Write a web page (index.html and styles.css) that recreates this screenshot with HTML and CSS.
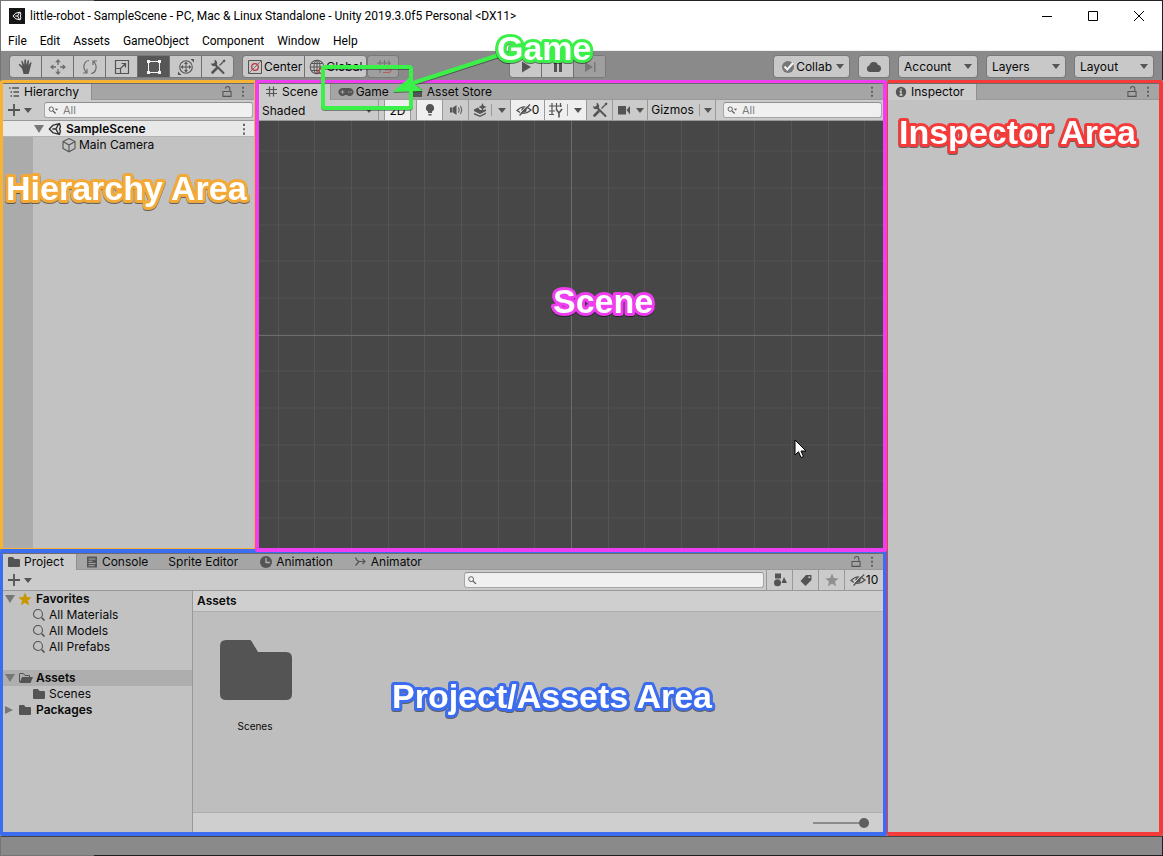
FILE: index.html
```html
<!DOCTYPE html>
<html lang="en">
<head>
<meta charset="utf-8">
<title>little-robot - SampleScene - Unity</title>
<link rel="stylesheet" href="styles.css">
</head>
<body>
<svg class="sprite" aria-hidden="true">
  <symbol id="unity" viewBox="0 0 16 16"><path d="M1.500 8 6 3.500 13 1.800 14.200 5.500 13.200 8 14.200 10.500 13 14.200 6 12.500ZM5 8h4M9 8l3-5.500M9 8l3 5.500" fill="none" stroke="currentColor" stroke-width="1.600" stroke-linejoin="round"/></symbol>
  <symbol id="hand" viewBox="0 0 16 16"><path d="M3.600 9 1 6.200c-.5-.8.4-1.500 1.200-.9L4.500 7.300 3.300 2.600c-.2-1 1-1.300 1.400-.4L6.200 6 6.400 1c.1-1 1.500-1 1.600 0L8.300 6l1.300-4.500c.3-.9 1.500-.6 1.400.3L10.500 6.600l1.800-3c.5-.8 1.500-.3 1.200.6-1 2.500-1.100 5-2 7.800L10.500 15h-5C5 12.500 4.500 10.500 3.600 9z" fill="currentColor"/></symbol>
  <symbol id="move" viewBox="0 0 16 16"><path d="M8 2.500v3.500M8 10v3.500M2.500 8H6M10 8h3.500" stroke="currentColor" stroke-width="1.300"/><path d="M8 0l2.800 3.300H5.200zM8 16l2.800-3.300H5.200zM0 8l3.300-2.800v5.600zM16 8l-3.300-2.800v5.600z" fill="currentColor"/></symbol>
  <symbol id="rotate" viewBox="0 0 16 16"><path d="M7 1.500C2.500 1.800-.5 8.500 4.500 13.700M1 14h4v-4M9 14.500c4.500-.3 7.500-7 2.500-12.200M15 2h-4v4" fill="none" stroke="currentColor" stroke-width="1.200"/></symbol>
  <symbol id="scale" viewBox="0 0 16 16"><path d="M1.500 1.500h13v13h-13zM1.500 9.500h5v5M6.500 9.500l5-5M7.500 4.500h4v4" fill="none" stroke="currentColor" stroke-width="1.200"/></symbol>
  <symbol id="rect" viewBox="0 0 16 16"><path d="M2.500 4v8M13.500 4v8M4 2.500h8M4 13.500h8" stroke="currentColor"/><path d="M1 1h3v3H1zM12 1h3v3h-3zM1 12h3v3H1zM12 12h3v3h-3z" fill="currentColor"/></symbol>
  <symbol id="transform" viewBox="0 0 16 16"><circle cx="8" cy="8" r="6.300" fill="none" stroke="currentColor" stroke-width="1.100"/><path d="M8 4v8M4 8h8" stroke="currentColor"/><path d="M8 2.500l2 2.500H6zM8 13.500l2-2.500H6zM2.500 8L5 6v4zM13.500 8L11 6v4zM12.500 0H16v3.500zM0 12.500V16h3.500z" fill="currentColor"/></symbol>
  <symbol id="tools" viewBox="0 0 16 16"><path d="M5.500 6l8 8" stroke="currentColor" stroke-width="2" stroke-linecap="round"/><path d="M4.500.8 4.800 3.300 3.200 4.700 1 4.300C1 6.800 4 8 6 6.800l1-1.200C7.700 3.500 6.500 1.200 4.500.8z" fill="currentColor"/><path d="M14.500 1.500 9.500 6.500" stroke="currentColor" stroke-width="1.300"/><path d="M6.500 9.500 2.500 13.500" stroke="currentColor" stroke-width="2.600" stroke-linecap="round"/><path d="M12.500 1.500 14.500.5l1 1-1 2z" fill="currentColor"/></symbol>
  <symbol id="center" viewBox="0 0 16 16"><path d="M1.500 1.500h13v13h-13z" fill="none" stroke="currentColor"/><path d="M2 14 14 2" stroke="currentColor" stroke-width=".7"/><circle cx="8" cy="8" r="3.300" fill="none" stroke="#c3383c" stroke-width="1.300"/></symbol>
  <symbol id="globe" viewBox="0 0 16 16"><g fill="none" stroke="currentColor" stroke-width="1.100"><circle cx="8" cy="8" r="6.800"/><ellipse cx="8" cy="8" rx="3" ry="6.800"/><path d="M1 8h14M2.500 4.500h11M2.500 11.500h11M8 1v14"/></g><circle cx="12.500" cy="12" r="2.500" fill="#c9c9c9" stroke="#c3383c" stroke-width="1.300"/></symbol>
  <symbol id="snap" viewBox="0 0 16 16"><path d="M4 1v13M8.500 1v9M13 1v6M1 4h14M1 8.500h10" stroke="currentColor"/><path d="M9 11h3c2 0 2-3 0-3M7 13.500h5c4 0 4-5.500 1-6" fill="none" stroke="#c3383c" stroke-width="1.200"/></symbol>
  <symbol id="play" viewBox="0 0 16 16"><path d="M4 2.500 13 8l-9 5.500z" fill="currentColor"/></symbol>
  <symbol id="pause" viewBox="0 0 16 16"><path d="M4 3h3v10H4zM9 3h3v10H9z" fill="currentColor"/></symbol>
  <symbol id="step" viewBox="0 0 16 16"><path d="M3 3l8 5-8 5zM12 3h1.500v10H12z" fill="currentColor"/></symbol>
  <symbol id="check" viewBox="0 0 16 16"><circle cx="8" cy="8" r="6" fill="#777"/><path d="M4.500 7.500 7.300 10.500 13 4" fill="none" stroke="#f4f4f4" stroke-width="2"/></symbol>
  <symbol id="cloud" viewBox="0 0 16 16"><path d="M4 13a3.300 3.300 0 0 1-.6-6.500A4.500 4.500 0 0 1 12 6a3.600 3.600 0 0 1 .5 7z" fill="currentColor"/></symbol>
  <symbol id="list" viewBox="0 0 16 16"><path d="M3 4h1.500M6 4h7M4.500 8H6M7.500 8H13M4.500 12H6M7.500 12H13" stroke="currentColor" stroke-width="1.300"/></symbol>
  <symbol id="hash" viewBox="0 0 16 16"><path d="M5.500 2.500v10M9.500 2.500v10M2 5.500h11M2 9.500h11" stroke="currentColor" stroke-width="1.200"/></symbol>
  <symbol id="pad" viewBox="0 0 16 16"><path d="M4.500 4h7a4 4 0 1 1-2.600 7H7.100A4 4 0 1 1 4.500 4z" fill="currentColor"/><path d="M2.800 8h3.400M4.500 6.300v3.400M10 8h1.500M12.500 8H14" stroke="#a5a5a5" stroke-width="1.100"/></symbol>
  <symbol id="bag" viewBox="0 0 16 16"><path d="M3 5h10v8H3z" fill="currentColor"/><path d="M6 6c0-4 5-4 5 0" fill="none" stroke="currentColor"/></symbol>
  <symbol id="info" viewBox="0 0 16 16"><circle cx="8" cy="8" r="5.200" fill="currentColor"/><path d="M8 4.500v1.800M6.500 7.500H8v3.500M6.500 11h3" stroke="#cbcbcb" stroke-width="1.400" fill="none"/></symbol>
  <symbol id="folder" viewBox="0 0 16 16"><path d="M2 4.200Q2 3 3 3h4l1.500 2H13q1 0 1 1v6q0 1-1 1H3q-1 0-1-1z" fill="currentColor"/></symbol>
  <symbol id="openfolder" viewBox="0 0 16 16"><path d="M2.500 12V4q0-.5.500-.5h3.500l1.500 2h4.500V7" fill="none" stroke="currentColor"/><path d="M5 7h11l-2.500 6H2.500z" fill="currentColor"/></symbol>
  <symbol id="console" viewBox="0 0 16 16"><path d="M3 2.500h10v11H3z" fill="currentColor"/><path d="M4.500 5h7M4.500 7.300h4M4.500 9.500h7M4.500 11.700h6" stroke="#a8a8a8"/></symbol>
  <symbol id="clock" viewBox="0 0 16 16"><circle cx="8" cy="8" r="6" fill="currentColor"/><path d="M8 4v4.500h4" fill="none" stroke="#b4b4b4" stroke-width="1.300"/></symbol>
  <symbol id="animator" viewBox="0 0 16 16"><path d="M2.500 3.500c1 2.500 1.500 4 4 4h5.500M2.500 11.500l3.500-4M9.500 5 12 7.500 9.500 10" fill="none" stroke="currentColor" stroke-width="1.200"/></symbol>
  <symbol id="lock" viewBox="0 0 16 16"><path d="M3 8h10v6H3zM11.500 8V4.500a2.700 2.700 0 0 0-5.400 0" fill="none" stroke="currentColor" stroke-width="1.300"/></symbol>
  <symbol id="kebab" viewBox="0 0 16 16"><path d="M7 2h2v2.500H7zM7 7h2v2.500H7zM7 12h2v2.500H7z" fill="currentColor"/></symbol>
  <symbol id="plus" viewBox="0 0 16 16"><path d="M8 2v12M2 8h12" stroke="currentColor" stroke-width="1.800"/></symbol>
  <symbol id="find" viewBox="0 0 16 16"><circle cx="7" cy="7" r="4.500" fill="none" stroke="currentColor" stroke-width="1.100"/><path d="M10.500 10.500 13.500 13.500" stroke="currentColor" stroke-width="1.700"/></symbol>
  <symbol id="findmore" viewBox="0 0 16 16"><circle cx="6" cy="7" r="2.500" fill="none" stroke="currentColor"/><path d="M8 9l3 3" stroke="currentColor" stroke-width="1.300"/><path d="M10 6.500h4l-2 2.200z" fill="currentColor"/></symbol>
  <symbol id="findone" viewBox="0 0 16 16"><circle cx="7" cy="7" r="2.800" fill="none" stroke="currentColor"/><path d="M9 9l3.500 3.500" stroke="currentColor" stroke-width="1.400"/></symbol>
  <symbol id="cube" viewBox="0 0 16 16"><path d="M8 1.500 14 4.500v7L8 14.800 2 11.500v-7zM2 4.500 8 8l6-3.500M8 8v6.800" fill="none" stroke="currentColor" stroke-width="1.100"/></symbol>
  <symbol id="bulb" viewBox="0 0 16 16"><path d="M8 2a4 4 0 0 1 2 7.500V11H6V9.500A4 4 0 0 1 8 2zM6.500 12h3v1.500h-3z" fill="currentColor"/></symbol>
  <symbol id="speaker" viewBox="0 0 16 16"><path d="M2 5.500h2.500v5H2zM5 5.500 8.500 3v10L5 10.500z" fill="currentColor"/><path d="M10.500 5.500q1.500 2.500 0 5M12.500 4q2.500 4 0 8" fill="none" stroke="currentColor"/></symbol>
  <symbol id="fx" viewBox="0 0 16 16"><path d="M2 7.500 6 5.500 8 8h4l2-1v2l-6 3-6-3zM2 11l6 2.500 6-3V12l-6 3-6-2.500z" fill="currentColor"/><path d="M10.500 1l1.200 2.800L14.500 5l-2.800 1.200L10.500 9 9.300 6.200 6.500 5l2.800-1.200z" fill="currentColor"/></symbol>
  <symbol id="hidden" viewBox="0 0 16 16"><path d="M1 8.500Q8 1.500 15 8Q8 14.500 1 8.500z" fill="none" stroke="currentColor" stroke-width="1.300"/><circle cx="8" cy="8" r="2.600" fill="currentColor"/><path d="M3.500 13.500 14 2.500" stroke="currentColor" stroke-width="1.500"/><path d="M2 13 12.500 2" stroke="#e4e4e4"/></symbol>
  <symbol id="gridy" viewBox="0 0 16 16"><path d="M4 1v12M8.500 1v6M12.500 1v4M1 4h13M1 9h6M1 12.500h5" stroke="currentColor" stroke-width="1.200"/><path d="M8 7 11 11M14 7 11 11v4.500" fill="none" stroke="currentColor" stroke-width="1.600"/></symbol>
  <symbol id="camera" viewBox="0 0 16 16"><path d="M2 4h8v8.500H2zM10.500 8 14 4v8.500z" fill="currentColor"/></symbol>
  <symbol id="shapes" viewBox="0 0 16 16"><path d="M3 1.500h6v5H3zM12 5l3 6H9.500z" fill="currentColor"/><circle cx="5.500" cy="10.800" r="3.500" fill="currentColor"/></symbol>
  <symbol id="tag" viewBox="0 0 16 16"><path d="M8 3h5.500v5L7.500 14 2.500 9z" fill="currentColor"/><circle cx="11.300" cy="5.200" r="1" fill="#cbcbcb"/></symbol>
  <symbol id="star" viewBox="0 0 16 16"><path d="M8 1.500 9.900 6l4.700.4-3.600 3.100 1.100 4.700L8 11.700l-4.100 2.500L5 9.500 1.400 6.400 6.100 6z" fill="currentColor"/></symbol>
</svg>

<div class="window">
  <header class="titlebar">
    <span class="logo"><svg class="i10"><use href="#unity"/></svg></span>
    <h1 class="title">little-robot - SampleScene - PC, Mac &amp; Linux Standalone - Unity 2019.3.0f5 Personal &lt;DX11&gt;</h1>
    <div class="wincontrols">
      <button aria-label="Minimize"><svg class="i10" viewBox="0 0 10 10"><path d="M0 5.500h10" stroke="#000"/></svg></button>
      <button aria-label="Maximize"><svg class="i10" viewBox="0 0 10 10"><path d="M.5.500h9v9h-9z" fill="none" stroke="#000"/></svg></button>
      <button aria-label="Close"><svg class="i10" viewBox="0 0 10 10"><path d="M0 0l10 10M10 0 0 10" stroke="#000"/></svg></button>
    </div>
  </header>
  <nav class="menubar">
    <button>File</button><button>Edit</button><button>Assets</button><button>GameObject</button><button>Component</button><button>Window</button><button>Help</button>
  </nav>

  <div class="toolbar">
    <div class="group tools">
      <button aria-label="Hand"><svg><use href="#hand"/></svg></button>
      <button class="mid" aria-label="Move"><svg><use href="#move"/></svg></button>
      <button class="mid" aria-label="Rotate"><svg><use href="#rotate"/></svg></button>
      <button aria-label="Scale"><svg><use href="#scale"/></svg></button>
      <button class="on" aria-label="Rect"><svg><use href="#rect"/></svg></button>
      <button aria-label="Transform"><svg><use href="#transform"/></svg></button>
      <button aria-label="Custom tools"><svg><use href="#tools"/></svg></button>
    </div>
    <div class="group pivot">
      <button><svg><use href="#center"/></svg>Center</button>
      <button><svg><use href="#globe"/></svg>Global</button>
    </div>
    <div class="group faded"><button aria-label="Snap"><svg><use href="#snap"/></svg></button></div>
    <span class="space-a"></span>
    <div class="group tools">
      <button aria-label="Play"><svg><use href="#play"/></svg></button>
      <button aria-label="Pause"><svg><use href="#pause"/></svg></button>
      <button class="dim" aria-label="Step" disabled><svg><use href="#step"/></svg></button>
    </div>
    <span class="space-b"></span>
    <div class="right">
      <button class="box collab"><svg><use href="#check"/></svg>Collab<i class="arrow"></i></button>
      <button class="box cloud" aria-label="Services"><svg><use href="#cloud"/></svg></button>
      <span class="box drop"><select aria-label="Account"><option>Account</option></select></span>
      <span class="box drop"><select aria-label="Layers"><option>Layers</option></select></span>
      <span class="box drop"><select aria-label="Layout"><option>Layout</option></select></span>
    </div>
  </div>

  <main class="workspace">
    <section class="panel hierarchy">
      <div class="tabs">
        <button class="tab active"><svg><use href="#list"/></svg>Hierarchy</button>
        <div class="tabtools"><button aria-label="Lock"><svg><use href="#lock"/></svg></button><button aria-label="Options"><svg><use href="#kebab"/></svg></button></div>
      </div>
      <div class="bar">
        <button class="add" aria-label="Create"><svg><use href="#plus"/></svg><i class="arrow"></i></button>
        <label class="search grow"><svg><use href="#findmore"/></svg><input type="text" placeholder="All" aria-label="Search hierarchy"></label>
      </div>
      <ul class="scenetree">
        <li class="sceneroot"><i class="open"></i><svg><use href="#unity"/></svg><b>SampleScene</b><button aria-label="Scene options"><svg class="i16"><use href="#kebab"/></svg></button></li>
        <li class="object"><svg><use href="#cube"/></svg>Main Camera</li>
      </ul>
      <svg class="note note-hierarchy"><text x="6" y="32">Hierarchy Area</text></svg>
    </section>

    <section class="panel scene">
      <div class="tabs">
        <button class="tab active"><svg><use href="#hash"/></svg>Scene</button>
        <button class="tab"><svg><use href="#pad"/></svg>Game</button>
        <button class="tab"><svg><use href="#bag"/></svg>Asset Store</button>
        <div class="tabtools"><button aria-label="Options"><svg><use href="#kebab"/></svg></button></div>
      </div>
      <div class="bar">
        <span class="shaded"><select aria-label="Draw mode"><option>Shaded</option></select></span>
        <div class="cells first"><button class="cell lit">2D</button></div>
        <div class="cells">
          <button class="cell lit" aria-label="Lighting"><svg><use href="#bulb"/></svg></button>
          <button class="cell" aria-label="Audio"><svg><use href="#speaker"/></svg></button>
          <button class="cell split" aria-label="Effects"><svg><use href="#fx"/></svg><i class="rule"></i><i class="arrow"></i></button>
          <button class="cell lit count"><svg><use href="#hidden"/></svg>0</button>
          <button class="cell lit split" aria-label="Grid"><svg><use href="#gridy"/></svg><i class="rule"></i><i class="arrow"></i></button>
          <button class="cell" aria-label="Editor tools"><svg><use href="#tools"/></svg></button>
          <button class="cell cam" aria-label="Camera"><svg><use href="#camera"/></svg><i class="arrow"></i></button>
          <button class="cell gizmos">Gizmos<i class="rule"></i><i class="arrow"></i></button>
        </div>
        <label class="search grow"><svg><use href="#findmore"/></svg><input type="text" placeholder="All" aria-label="Search scene"></label>
      </div>
      <div class="viewport">
        <svg class="note note-scene"><text x="6" y="32">Scene</text></svg>
        <svg class="cursor" viewBox="0 0 13 20"><path d="M1 1v15l3.500-3.300L7 18.500l2.500-1L7 12h5z" fill="#fff" stroke="#000"/></svg>
      </div>
      <svg class="callout" viewBox="0 0 300 80" aria-hidden="true">
        <rect x="2" y="27" width="88" height="41" rx="2"/><path d="M178 15 92 43"/>
        <path class="callout-head" d="M72 52 90 36 92 43 102 51z"/>
      </svg>
      <svg class="note note-game"><text x="6" y="32">Game</text></svg>
    </section>

    <section class="panel inspector">
      <div class="tabs">
        <button class="tab active"><svg><use href="#info"/></svg>Inspector</button>
        <div class="tabtools"><button aria-label="Lock"><svg><use href="#lock"/></svg></button><button aria-label="Options"><svg><use href="#kebab"/></svg></button></div>
      </div>
      <svg class="note note-inspector"><text x="6" y="32">Inspector Area</text></svg>
    </section>

    <section class="panel project">
      <div class="tabs">
        <button class="tab active"><svg><use href="#folder"/></svg>Project</button>
        <button class="tab"><svg><use href="#console"/></svg>Console</button>
        <button class="tab">Sprite Editor</button>
        <button class="tab"><svg><use href="#clock"/></svg>Animation</button>
        <button class="tab"><svg><use href="#animator"/></svg>Animator</button>
        <div class="tabtools"><button aria-label="Lock"><svg><use href="#lock"/></svg></button><button aria-label="Options"><svg><use href="#kebab"/></svg></button></div>
      </div>
      <div class="bar">
        <button class="add" aria-label="Create"><svg><use href="#plus"/></svg><i class="arrow"></i></button>
        <label class="search wide"><svg><use href="#findone"/></svg><input type="text" aria-label="Search project"></label>
        <div class="cells">
          <button class="cell" aria-label="Search by type"><svg><use href="#shapes"/></svg></button>
          <button class="cell" aria-label="Search by label"><svg><use href="#tag"/></svg></button>
          <button class="cell pale" aria-label="Save search"><svg><use href="#star"/></svg></button>
          <button class="cell count last"><svg><use href="#hidden"/></svg>10</button>
        </div>
      </div>
      <div class="projectbody">
        <ul class="tree">
          <li class="top"><i class="open"></i><svg class="gold"><use href="#star"/></svg><b>Favorites</b></li>
          <li class="child"><svg><use href="#find"/></svg>All Materials</li>
          <li class="child"><svg><use href="#find"/></svg>All Models</li>
          <li class="child"><svg><use href="#find"/></svg>All Prefabs</li>
          <li class="top picked"><i class="open"></i><svg><use href="#openfolder"/></svg><b>Assets</b></li>
          <li class="child"><svg><use href="#folder"/></svg>Scenes</li>
          <li class="top"><i class="closed"></i><svg><use href="#folder"/></svg><b>Packages</b></li>
        </ul>
        <div class="browser">
          <div class="crumb">Assets</div>
          <div class="files">
            <figure class="file">
              <svg viewBox="0 0 72 60"><path d="M0 6Q0 0 6 0h24q1 0 2 2l6 10h28q6 0 6 6v36q0 6-6 6H6q-6 0-6-6z" fill="#545454"/></svg>
              <figcaption>Scenes</figcaption>
            </figure>
          </div>
          <div class="zoombar"><input type="range" min="0" max="100" value="100" aria-label="Icon size"></div>
        </div>
      </div>
      <svg class="note note-project"><text x="6" y="32">Project/Assets Area</text></svg>
    </section>
  </main>
  <footer class="status"></footer>
</div>
</body>
</html>
```
FILE: styles.css
```css
* { box-sizing: border-box; }
body, h1, p, ul, figure { margin: 0; padding: 0; }
ul { list-style: none; }
body { font: 12px/16px Inter, sans-serif; color: #090909; }
button, input, select {
  font: inherit; color: inherit; background: none; border: 0; margin: 0; padding: 0;
  appearance: none; outline: 0;
}
button { display: flex; align-items: center; justify-content: center; white-space: nowrap; }
svg { width: 16px; height: 16px; flex: none; color: #545454; display: block; }
.sprite { position: absolute; width: 0; height: 0; }
.i10 { width: 10px; height: 10px; }

.window {
  min-height: 100vh; display: flex; flex-direction: column; padding: 1px;
  background: linear-gradient(90deg, #757575 94px, #231f24 94px);
}

/* Title and menus */
.titlebar { display: flex; align-items: center; height: 30px; padding-left: 8px; background: #fff; }
.logo { width: 16px; height: 16px; display: grid; place-items: center; background: #161616; }
.logo svg { color: #fff; }
.title { font: 12px/16px Roboto, "Open Sans", sans-serif; margin-left: 5px; color: #000; white-space: nowrap; }
.wincontrols { display: flex; margin-left: auto; }
.wincontrols button { width: 46px; height: 28px; }
.menubar {
  display: flex; height: 20px; background: #fff; border-bottom: 1px solid #f0f0f0;
}
.menubar button { font: 12px/16px Roboto, "Open Sans", sans-serif; color: #000; padding: 0 6px 0 7px; }

/* Main toolbar */
.toolbar { display: flex; height: 29px; padding: 5px 9px 0; background: #8a8a8a; }
.group, .box { height: 21px; border-radius: 3px; background: #c8c8c8; box-shadow: 0 0 0 1px #7a7a7a; }
.group { display: flex; overflow: hidden; }
.group button { height: 21px; padding: 0 2px 0 4px; gap: 1px; }
.group button + button { border-left: 1px solid #6f6f6f; padding-right: 4px; }
.group.tools button { width: 32px; padding: 0; }
.group.tools button:first-child { width: 31px; }
.tools .mid svg { color: #6c6c6c; }
.tools .on { background: #575757; }
.tools .on svg { color: #f4f4f4; }
.tools .dim { background: #9f9f9f; }
.tools .dim svg { color: #777; }
.pivot { margin: 0 2px 0 10px; }
.faded { background: #9f9f9f; }
.faded button { width: 30px; }
.faded svg { opacity: .6; }
.space-a { flex: 111; }
.space-b { flex: 167; }
.right { display: flex; gap: 10px; }
.collab { padding: 0 5px 0 6px; }
.collab .arrow { margin-left: 4px; }
.cloud { width: 30px; }
.drop { display: flex; width: 78px; position: relative; align-items: center; }
.drop select { width: 100%; padding-left: 5px; line-height: 16px; font-size: 12px; }
.arrow, .drop::after, .shaded::after {
  border: 4px solid transparent; border-top: 5px solid #545454; border-bottom: 0; width: 0; height: 0;
}
.drop::after, .shaded::after { content: ""; position: absolute; right: 5px; top: 8px; pointer-events: none; }

/* Panels */
.workspace {
  flex: 1; margin: 0 -1px; display: grid; background: #8a8a8a;
  grid-template-columns: 255px minmax(0, 1fr) 276px; grid-template-rows: minmax(0, 1fr) 287px;
}
.panel { position: relative; display: flex; flex-direction: column; background: #c2c2c2; border-style: solid; }
.hierarchy { border-color: #f7b334; border-width: 3px 1px 1px 3px; border-top-left-radius: 3px; }
.scene { border: 4px solid #ee3ef0; border-top-width: 3px; border-radius: 3px; margin-bottom: -3px; z-index: 2; }
.inspector { border-color: #f43b3a; border-width: 3px 4px 4px 1px; grid-column: 3; grid-row: 1 / 3; border-radius: 3px; }
.project { border-color: #3c6cf0; border-width: 4px 4px 4px 3px; grid-column: 1 / 3; border-radius: 3px; }

.tabs { display: flex; height: 17px; flex: none; background: #a5a5a5; border-top: 1px solid #6c6c6c; }
.tab { padding: 0 13px 0 7px; gap: 2px; border-bottom: 1px solid #999; }
.tab.active { background: #cbcbcb; padding-left: 3px; padding-right: 12px; border-right: 1px solid #8f8f8f; border-bottom: 0; }
.scene .tab.active, .inspector .tab.active { padding-left: 5px; }
.tabtools { flex: 1; display: flex; justify-content: flex-end; padding-right: 3px; border-bottom: 1px solid #999; }
.tabtools svg { height: 13px; }
.bar { display: flex; align-items: center; height: 21px; flex: none; background: #cbcbcb; border-bottom: 1px solid #999; }
.add { padding-left: 3px; gap: 2px; }
.search {
  display: flex; align-items: center; height: 16px; background: #f0f0f0; border: 1px solid #a6a6a6;
  border-top-color: #8f8f8f; border-radius: 3px; margin: 0 1px 0 12px;
}
.search svg { width: 14px; height: 14px; }
.search input { width: 100%; min-width: 0; padding-left: 2px; font-size: 11px; line-height: 14px; height: 14px; }
.search input::placeholder { color: #7d7d7d; opacity: 1; }
.grow { flex: 1; }
.wide { flex: 0 1 300px; margin: 0 2px 0 auto; }
.scene .search { margin-left: 7px; }
.hierarchy .search svg, .scene .search svg { width: 16px; }

/* Hierarchy */
.scenetree { flex: 1; background: linear-gradient(90deg, #ababab 30px, #c2c2c2 30px); }
.scenetree li { display: flex; align-items: center; height: 16px; }
.scenetree .sceneroot { background: #e8e8e8; padding-left: 31px; border-bottom: 1px solid #b4b4b4; }
.sceneroot svg { width: 14px; height: 14px; margin: 0 4px; color: #333; }
.sceneroot button { margin-left: auto; }
.sceneroot .i16 { width: 16px; margin: 0 2px 0 0; color: #545454; }
.scenetree .object { padding-left: 58px; gap: 2px; }
.open { border: 5px solid transparent; border-top: 8px solid #777; border-bottom: 0; }
.closed { border: 4px solid transparent; border-left: 8px solid #777; border-right: 0; margin-right: 2px; }
b { font-weight: 600; }

/* Scene */
.shaded { position: relative; width: 120px; border-right: 1px solid #999; }
.shaded select { width: 100%; padding: 1px 0 0 3px; height: 20px; }
.cells { display: flex; height: 20px; border-left: 1px solid #999; }
.cells.first { margin: 0 5px; }
.cells.first .cell { padding-top: 1px; }
.cell { min-width: 26px; border-right: 1px solid #999; }
.lit { background: #efefef; }
.split { width: 42px; gap: 3px; padding-right: 2px; }
.rule { width: 1px; height: 12px; background: #999; margin-right: 3px; }
.count { width: 34px; }
.cam { width: 35px; gap: 4px; }
.gizmos { width: 68px; }
.gizmos .rule { margin: 0 4px 0 5px; }
.last { width: 38px; border-right: 0; }
.pale svg { color: #909090; }
.viewport {
  flex: 1; position: relative; background-color: #474747;
  background-image:
    linear-gradient(#6c6c6c, #6c6c6c),
    linear-gradient(#6c6c6c, #6c6c6c),
    linear-gradient(90deg, #545454 1px, transparent 1px 37px, #545454 37px 38px, transparent 38px 73px, #545454 73px 74px, transparent 74px),
    linear-gradient(#525252 1px, transparent 1px 36px, #525252 36px 37px, transparent 37px 73px, #525252 73px 74px, transparent 74px);
  background-size: 1px 100%, 100% 1px, 110px 100%, 100% 110px;
  background-position: 50% 0, 0 calc(50% + 1px), calc(50% + 55px) 0, 0 calc(50% + 55px);
  background-repeat: no-repeat, no-repeat, repeat, repeat;
}
.cursor { position: absolute; left: 86%; top: 75%; width: 13px; height: 20px; margin: -2px; }

/* Project */
.projectbody { flex: 1; display: flex; }
.tree { width: 190px; border-right: 1px solid #999; }
.tree li { display: flex; align-items: center; height: 16px; }
.tree .top { padding-left: 2px; gap: 2px; }
.tree b { padding-left: 1px; }
.tree .child { padding-left: 28px; gap: 2px; }
.tree .picked { background: #aeaeae; margin-top: 15px; }
.tree .gold { color: #c99700; }
.browser { flex: 1; display: flex; flex-direction: column; background: #bebebe; }
.crumb { height: 21px; padding: 2px 4px; font-weight: 600; background: #cfcfcf; border-bottom: 1px solid #adadad; }
.files { flex: 1; padding: 28px 27px; display: flex; }
.file { width: 70px; font-size: 10px; text-align: center; }
.file svg { width: 72px; height: 60px; margin-bottom: 18px; }
.zoombar { display: flex; align-items: center; justify-content: flex-end; height: 20px; padding-right: 14px; background: #cfcfcf; border-top: 1px solid #adadad; }
.zoombar input { width: 56px; height: 10px; }
.zoombar input::-webkit-slider-runnable-track { height: 2px; background: #8c8c8c; }
.zoombar input::-webkit-slider-thumb { appearance: none; width: 10px; height: 10px; margin-top: -4px; border-radius: 5px; background: #5f5f5f; }

.status { height: 19px; background: #8a8a8a; border-top: 1px solid #454545; }

/* Annotations over the panels */
.note {
  position: absolute; width: 250px; height: 46px; overflow: visible; pointer-events: none;
  font: bold 34px/40px "Liberation Sans", Arial, sans-serif;
  filter: drop-shadow(0 1px 0 rgba(0, 0, 0, .5));
}
.note text { fill: #fff; stroke: var(--edge); stroke-width: 6px; stroke-linejoin: round; paint-order: stroke fill; }
.note-hierarchy { --edge: #f2a937; left: -3px; top: 85px; }
.note-scene { --edge: #ee3ef0; left: 288px; top: 160px; }
.note-inspector { --edge: #f43b3a; left: 5px; top: 29px; }
.note-project { --edge: #3c6cf0; left: 383px; top: 123px; width: 340px; }
.note-game { --edge: #3cf04a; left: 232px; top: -55px; }
.callout {
  position: absolute; left: 62px; top: -43px; width: 300px; height: 80px; pointer-events: none;
  fill: none; stroke: #3cf04a; stroke-width: 4px; filter: drop-shadow(0 1px 0 rgba(0, 0, 0, .4));
}
.callout-head { fill: #3cf04a; stroke: none; }
```
